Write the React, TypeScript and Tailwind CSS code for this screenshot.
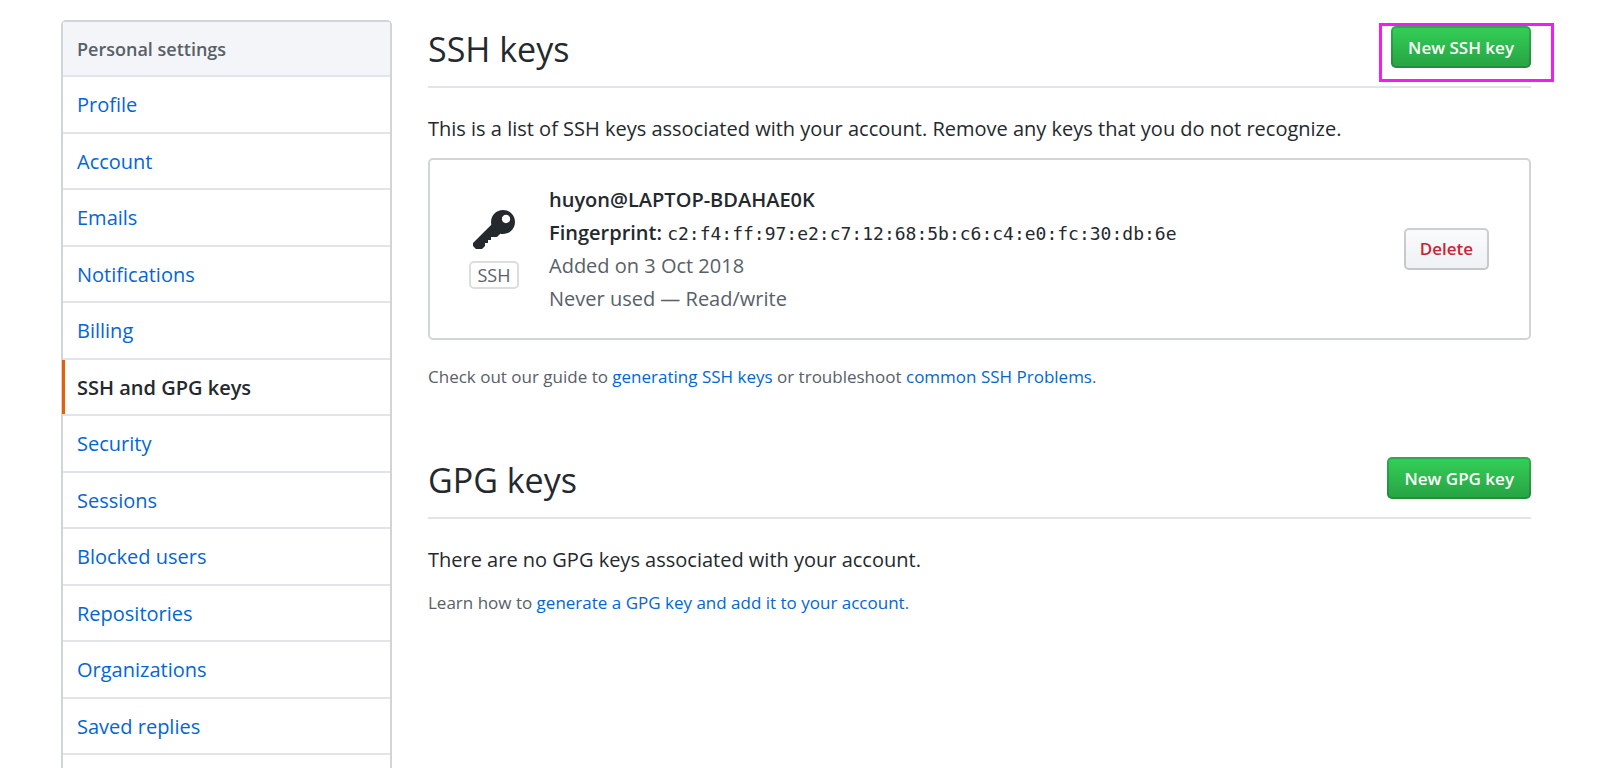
const navItems = [
  'Profile',
  'Account',
  'Emails',
  'Notifications',
  'Billing',
  'SSH and GPG keys',
  'Security',
  'Sessions',
  'Blocked users',
  'Repositories',
  'Organizations',
  'Saved replies',
];

const activeItem = 'SSH and GPG keys';

const primaryButton =
  'h-[42px] cursor-pointer rounded-[5px] border-2 border-[#1b1f23]/20 bg-[linear-gradient(-180deg,#34d058,#28a745_90%)] bg-origin-border px-[15px] pt-0.5 text-[17px] leading-6 font-semibold whitespace-nowrap text-white';

function Sidebar() {
  return (
    <nav
      aria-label="Personal settings"
      className="w-[331px] shrink-0 rounded-t-[5px] border-2 border-b-0 border-[#d1d5da]"
    >
      <h3 className="border-b-2 border-[#e1e4e8] bg-[#f3f5f8] px-[14px] pt-3 pb-[10px] text-[18px] leading-[31px] font-semibold text-[#586069]">
        Personal settings
      </h3>
      <ul>
        {navItems.map((item) => (
          <li key={item} className="relative border-b-2 border-[#e1e4e8] odd:pb-px">
            {item === activeItem ? (
              <>
                <span className="absolute inset-y-0 -left-px w-[3px] bg-[#e36209]" />
                <a
                  href="#"
                  aria-current="page"
                  className="block px-[14px] pt-3 pb-[11px] text-[20px] leading-[31px] font-semibold text-[#24292e]"
                >
                  {item}
                </a>
              </>
            ) : (
              <a href="#" className="block px-[14px] pt-3 pb-[11px] text-[20px] leading-[31px] text-[#0366d6]">
                {item}
              </a>
            )}
          </li>
        ))}
      </ul>
    </nav>
  );
}

function KeyIcon() {
  return (
    <svg viewBox="0 0 14 16" className="h-12 w-[42px]" fill="#24292e" aria-hidden="true">
      <path
        fillRule="evenodd"
        d="M12.83 2.17C12.08 1.42 11.14 1.03 10 1c-1.13.03-2.08.42-2.83 1.17S6.04 3.86 6.01 5c0 .3.03.59.09.89L0 12v1l1 1h2l1-1v-1h1v-1h1v-1h2l1.09-1.11c.3.08.59.11.91.11 1.14-.03 2.08-.42 2.83-1.17S13.97 6.14 14 5c-.03-1.14-.42-2.08-1.17-2.83zM11 5.38c-.77 0-1.38-.61-1.38-1.38 0-.77.61-1.38 1.38-1.38.77 0 1.38.61 1.38 1.38 0 .77-.61 1.38-1.38 1.38z"
      />
    </svg>
  );
}

export default function App() {
  return (
    <div className="flex h-screen items-stretch overflow-hidden bg-white pt-5 pr-[89px] pl-[61px] font-['Open_Sans','Noto_Sans',sans-serif] text-[20px] text-[#24292e]">
      <Sidebar />
      <main className="ml-9 min-w-0 flex-1">
        <section>
          <header className="flex items-start justify-between border-b-2 border-[#e1e4e8] pt-[6px] pb-[14px]">
            <h2 className="text-[34px] leading-[46px]">SSH keys</h2>
            <div className="relative">
              <button type="button" className={primaryButton}>
                New SSH key
              </button>
              <span className="pointer-events-none absolute -top-[3px] -right-[23px] -bottom-[14px] -left-3 border-3 border-[#f41cf4]" />
            </div>
          </header>
          <p className="mt-6 leading-[34px]">
            This is a list of SSH keys associated with your account. Remove any keys that you do not recognize.
          </p>
          <div className="mt-3 flex items-center rounded-[5px] border-2 border-[#d1d5da] py-[23px] pr-10 pl-[39px]">
            <div className="flex w-[50px] shrink-0 flex-col items-center pb-0.5">
              <KeyIcon />
              <span className="mt-[6px] rounded-[5px] border-2 border-[#dddddd] px-[6px] text-[18px] leading-6 text-[#586069]">
                SSH
              </span>
            </div>
            <div className="ml-[30px] flex-1 leading-[33px]">
              <p className="font-semibold">huyon@LAPTOP-BDAHAE0K</p>
              <p>
                <strong className="font-semibold">Fingerprint:</strong>{' '}
                <code className="font-['DejaVu_Sans_Mono',monospace] text-[18px] leading-none">
                  c2:f4:ff:97:e2:c7:12:68:5b:c6:c4:e0:fc:30:db:6e
                </code>
              </p>
              <p className="text-[#586069]">Added on 3 Oct 2018</p>
              <p className="text-[#586069]">Never used — Read/write</p>
            </div>
            <button
              type="button"
              className="h-[42px] cursor-pointer rounded-[5px] border-2 border-[#1b1f23]/20 bg-[linear-gradient(-180deg,#fafbfc,#eff3f6_90%)] bg-origin-border px-[14px] text-[17px] leading-6 font-semibold text-[#cb2431]"
            >
              Delete
            </button>
          </div>
          <p className="mt-[22px] text-[17px] leading-[30px] text-[#586069]">
            Check out our guide to{' '}
            <a href="#" className="text-[#0366d6]">
              generating SSH keys
            </a>{' '}
            or troubleshoot{' '}
            <a href="#" className="text-[#0366d6]">
              common SSH Problems
            </a>
            .
          </p>
        </section>
        <section className="mt-[59px]">
          <header className="flex items-start justify-between border-b-2 border-[#e1e4e8] pt-[6px] pb-[14px]">
            <h2 className="text-[34px] leading-[46px]">GPG keys</h2>
            <button type="button" className={primaryButton}>
              New GPG key
            </button>
          </header>
          <p className="mt-6 leading-[34px]">There are no GPG keys associated with your account.</p>
          <p className="mt-[11px] text-[17px] leading-[30px] text-[#586069]">
            Learn how to{' '}
            <a href="#" className="text-[#0366d6]">
              generate a GPG key and add it to your account
            </a>
            .
          </p>
        </section>
      </main>
    </div>
  );
}
